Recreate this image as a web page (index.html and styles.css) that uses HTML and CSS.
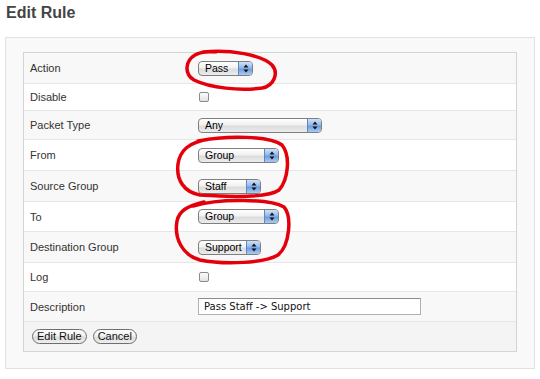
FILE: index.html
```html
<!DOCTYPE html>
<html>
<head>
<meta charset="utf-8">
<title>Edit Rule</title>
<link rel="stylesheet" href="styles.css">
</head>
<body>
<h1 class="title">Edit Rule</h1>
<div class="panel">
  <div class="form">
    <div class="row alt h31">
      <div class="label">Action</div>
      <div class="field"><span class="select w55"><span class="val">Pass</span><span class="arrows"><svg width="6" height="9" viewBox="0 0 6 9"><path d="M3 0.5 L5.5 3.5 H0.5 Z M3 8.5 L5.5 5.5 H0.5 Z" fill="#111"/></svg></span></span></div>
    </div>
    <div class="row h27">
      <div class="label">Disable</div>
      <div class="field"><span class="checkbox"></span></div>
    </div>
    <div class="row alt h29">
      <div class="label">Packet Type</div>
      <div class="field"><span class="select w124"><span class="val">Any</span><span class="arrows"><svg width="6" height="9" viewBox="0 0 6 9"><path d="M3 0.5 L5.5 3.5 H0.5 Z M3 8.5 L5.5 5.5 H0.5 Z" fill="#111"/></svg></span></span></div>
    </div>
    <div class="row h31">
      <div class="label">From</div>
      <div class="field"><span class="select w81"><span class="val">Group</span><span class="arrows"><svg width="6" height="9" viewBox="0 0 6 9"><path d="M3 0.5 L5.5 3.5 H0.5 Z M3 8.5 L5.5 5.5 H0.5 Z" fill="#111"/></svg></span></span></div>
    </div>
    <div class="row alt h31">
      <div class="label">Source Group</div>
      <div class="field"><span class="select w63"><span class="val">Staff</span><span class="arrows"><svg width="6" height="9" viewBox="0 0 6 9"><path d="M3 0.5 L5.5 3.5 H0.5 Z M3 8.5 L5.5 5.5 H0.5 Z" fill="#111"/></svg></span></span></div>
    </div>
    <div class="row h30">
      <div class="label">To</div>
      <div class="field"><span class="select w81"><span class="val">Group</span><span class="arrows"><svg width="6" height="9" viewBox="0 0 6 9"><path d="M3 0.5 L5.5 3.5 H0.5 Z M3 8.5 L5.5 5.5 H0.5 Z" fill="#111"/></svg></span></span></div>
    </div>
    <div class="row alt h31">
      <div class="label">Destination Group</div>
      <div class="field"><span class="select w63"><span class="val">Support</span><span class="arrows"><svg width="6" height="9" viewBox="0 0 6 9"><path d="M3 0.5 L5.5 3.5 H0.5 Z M3 8.5 L5.5 5.5 H0.5 Z" fill="#111"/></svg></span></span></div>
    </div>
    <div class="row h29">
      <div class="label">Log</div>
      <div class="field"><span class="checkbox"></span></div>
    </div>
    <div class="row alt h30">
      <div class="label">Description</div>
      <div class="field"><span class="textbox">Pass Staff -&gt; Support</span></div>
    </div>
    <div class="row actions">
      <span class="btn">Edit Rule</span>
      <span class="btn">Cancel</span>
    </div>
  </div>
</div>
<svg class="marks" width="540" height="379" viewBox="0 0 540 379">
  <g fill="none" stroke="#e3000b" stroke-width="3.5" stroke-linecap="round" stroke-linejoin="round">
    <path d="M203 52 C230 49 262 55 272 65 C279 73 274 86 262 88 C240 91 210 88 194 80 C184 74 185 61 195 55 C200 52 206 51 216 52"/>
    <path d="M198 141 C228 135 270 136 282 145 C291 156 288 180 279 190 C268 198 230 197 200 195 C184 192 176 180 178 164 C180 151 188 142 210 139"/>
    <path d="M193 206 C220 198 270 199 284 207 C292 216 290 245 278 255 C265 263 225 265 200 260 C182 255 174 238 177 221 C179 211 187 206 204 202"/>
  </g>
</svg>
</body>
</html>
```
FILE: styles.css
```css
html, body {
  margin: 0;
  padding: 0;
  background: #fff;
}
body {
  font-family: "Liberation Sans", Arial, sans-serif;
  color: #333;
  width: 540px;
  height: 379px;
  position: relative;
  overflow: hidden;
}
.title {
  margin: 0;
  padding: 3px 0 0 6px;
  font-size: 16px;
  line-height: 20px;
  font-weight: bold;
  color: #444;
}
.panel {
  margin: 14px 0 0 5px;
  width: 530px;
  box-sizing: border-box;
  border: 1px solid #e2e2e2;
  background: #f9f9f9;
  padding: 14px 17px 16px 17px;
}
.form {
  border: 1px solid #d4d4d4;
  background: #fff;
}
.row {
  display: flex;
  align-items: center;
  height: 30px;
  box-sizing: border-box;
  border-bottom: 1px solid #e6e6e6;
  background: #fff;
}
.row.alt {
  background: #f8f8f8;
}
.h27 { height: 27px; }
.h29 { height: 29px; }
.h30 { height: 30px; }
.h31 { height: 31px; }
.label {
  width: 168px;
  padding-left: 6px;
  font-size: 11px;
  color: #333;
  flex: none;
}
.field {
  display: flex;
  align-items: center;
}
.select {
  display: flex;
  align-items: stretch;
  height: 15px;
  box-sizing: border-box;
  border: 1px solid #7f7f7f;
  border-radius: 4px;
  overflow: hidden;
  background: linear-gradient(#ffffff, #f1f1f1 45%, #dcdcdc 55%, #ececec);
  font-family: "Liberation Sans", Arial, sans-serif;
  font-size: 10.5px;
  color: #000;
}
.select .val {
  flex: 1;
  padding-left: 6px;
  line-height: 13px;
  white-space: nowrap;
}
.select .arrows {
  width: 13px;
  flex: none;
  display: flex;
  align-items: center;
  justify-content: center;
  border-left: 1px solid #5f86c0;
  background: linear-gradient(#cfe2f8, #93b9ea 45%, #6c9de0 55%, #a9cbf3);
}
.w55 { width: 55px; }
.w63 { width: 63px; }
.w81 { width: 81px; }
.w124 { width: 124px; }
.checkbox {
  display: block;
  width: 10px;
  height: 10px;
  margin-left: 1px;
  box-sizing: border-box;
  border: 1px solid #8a8a8a;
  border-radius: 2px;
  background: linear-gradient(#fdfdfd, #e2e2e2);
}
.textbox {
  display: block;
  width: 223px;
  height: 17px;
  box-sizing: border-box;
  border: 1px solid #b0b0b0;
  border-top-color: #8c8c8c;
  background: #fff;
  padding-left: 5px;
  font-family: "DejaVu Sans", sans-serif;
  font-size: 10px;
  line-height: 15px;
  color: #111;
}
.row.actions {
  height: 29px;
  border-bottom: none;
  background: #f4f4f4;
  padding-left: 8px;
  gap: 6px;
}
.btn {
  display: block;
  height: 15px;
  box-sizing: border-box;
  padding: 0 4px;
  border: 1px solid #6e6e6e;
  border-radius: 8px;
  background: linear-gradient(#ffffff, #f0f0f0 45%, #dedede 55%, #eeeeee);
  font-family: "Liberation Sans", Arial, sans-serif;
  font-size: 11px;
  line-height: 13px;
  color: #111;
}
.marks {
  position: absolute;
  left: 0;
  top: 0;
  pointer-events: none;
}
```
